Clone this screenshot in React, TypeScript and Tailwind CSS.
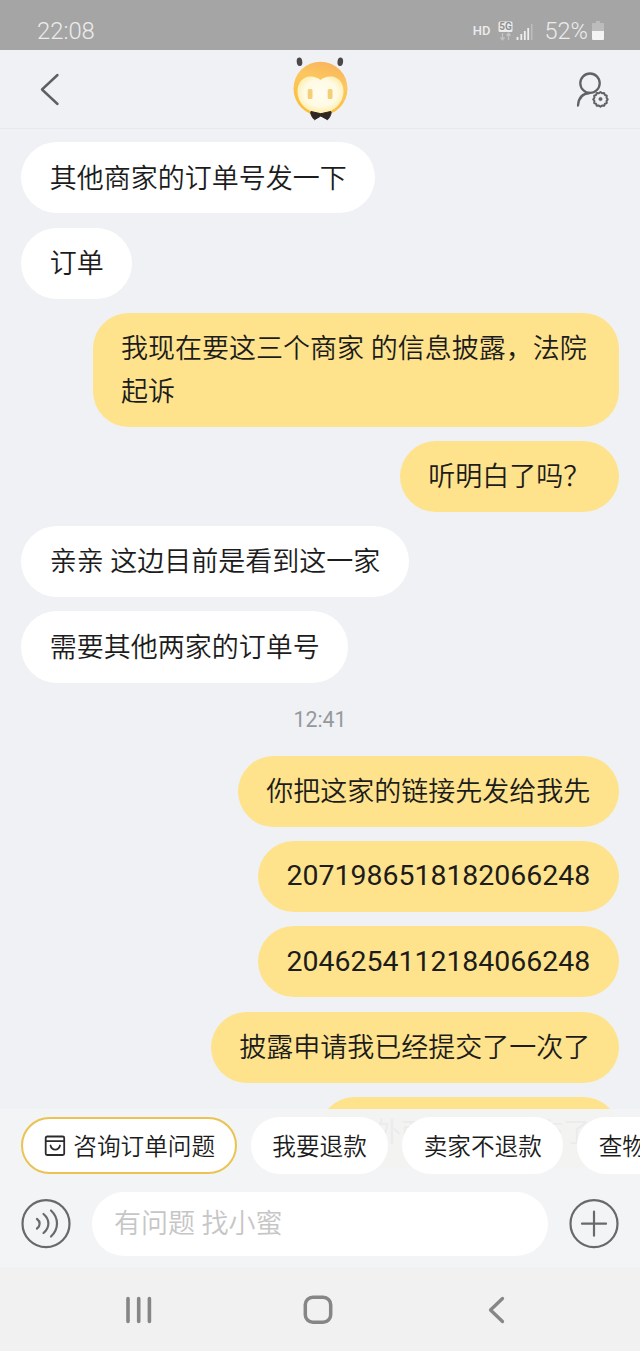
type Message = {
  from: "agent" | "me";
  text: string;
  numeric?: boolean;
};

const EARLIER: Message[] = [
  { from: "agent", text: "其他商家的订单号发一下" },
  { from: "agent", text: "订单" },
  { from: "me", text: "我现在要这三个商家 的信息披露，法院起诉" },
  { from: "me", text: "听明白了吗？" },
  { from: "agent", text: "亲亲 这边目前是看到这一家" },
  { from: "agent", text: "需要其他两家的订单号" },
];

const LATER: Message[] = [
  { from: "me", text: "你把这家的链接先发给我先" },
  { from: "me", text: "2071986518182066248", numeric: true },
  { from: "me", text: "2046254112184066248", numeric: true },
  { from: "me", text: "披露申请我已经提交了一次了" },
  { from: "me", text: "另外两家也都提交了" },
];

export default function App() {
  return (
    <div className="w-[640px] h-[1351px] flex flex-col overflow-hidden bg-[#eff1f5] font-['Roboto','Noto_Sans_CJK_SC',sans-serif] text-[#1c1c1c]">
      <StatusBar />
      <Header />
      <main className="flex-1 min-h-0 overflow-hidden flex flex-col gap-[14.22px] px-[21.33px] pt-[13.4px]">
        {EARLIER.map((m) => (
          <Bubble key={m.text} message={m} />
        ))}
        <div className="h-[44.8px] shrink-0 flex items-center justify-center pt-[2px] text-[21.3px] text-[#96989c]">
          12:41
        </div>
        {LATER.map((m) => (
          <Bubble key={m.text} message={m} />
        ))}
      </main>
      <footer className="relative shrink-0 h-[158px] -mt-[158px] bg-[#f3f4f5]/96">
        <QuickReplies />
        <InputBar />
      </footer>
      <NavBar />
    </div>
  );
}

function StatusBar() {
  return (
    <div className="h-[50px] shrink-0 flex items-center justify-between bg-[#a5a5a5] pl-[37px] pr-[36px] pt-[14px] text-[#ececec]">
      <span className="text-[23.8px] font-light">22:08</span>
      <div className="flex items-center">
        <span className="text-[13px] font-medium -mt-[2px]">HD</span>
        <svg width="15" height="22" viewBox="0 0 15 22" className="ml-[7px] -mt-[3px]">
          <rect x="0.5" y="1.5" width="14" height="10.5" rx="1.5" fill="#ececec" />
          <text
            x="7.5"
            y="10.3"
            textAnchor="middle"
            fontSize="10"
            fontWeight="700"
            fill="#8e8e8e"
          >
            5G
          </text>
          <path
            d="M4.5 13v6.5M2.5 17.5l2 2.2 2-2.2M10.5 20v-6.5M8.5 15.5l2-2.2 2 2.2"
            stroke="#c4c4c4"
            strokeWidth="1.3"
            fill="none"
          />
        </svg>
        <svg width="18" height="18" viewBox="0 0 18 18" className="ml-[3px]">
          <path
            d="M1.5 17v-3M5.3 17v-6M8.8 17v-9M12.2 17v-12"
            stroke="#efefef"
            strokeWidth="1.8"
          />
          <path d="M15.7 17v-16" stroke="#bdbdbd" strokeWidth="1.6" />
        </svg>
        <span className="ml-[11px] text-[23.5px] font-light">52%</span>
        <svg width="12" height="20" viewBox="0 0 12 20" className="ml-[4px] -mt-[3px]">
          <path d="M4 0h4v2h3a1 1 0 0 1 1 1v8H0V3a1 1 0 0 1 1-1h3z" fill="#bcbcbc" />
          <path d="M0 10h12v8a1 1 0 0 1-1 1H1a1 1 0 0 1-1-1z" fill="#f4f4f4" />
        </svg>
      </div>
    </div>
  );
}

function Header() {
  return (
    <header className="h-[79px] shrink-0 flex items-center justify-between border-b border-[#e6e8eb] bg-[#f0f1f5] pl-[39px] pr-[31px]">
      <svg width="22" height="34" viewBox="0 0 22 34" fill="none">
        <path
          d="M18.5 3L3 17.5l15.5 14.5"
          stroke="#5e5f62"
          strokeWidth="2.4"
          strokeLinecap="round"
          strokeLinejoin="round"
        />
      </svg>
      <Mascot />
      <svg width="34" height="38" viewBox="0 0 34 38" fill="none" stroke="#616265">
        <circle cx="15" cy="13.2" r="9.7" strokeWidth="2.3" />
        <path d="M3 35.5c.5-7 4-12 11.5-12.5" strokeWidth="2.3" strokeLinecap="round" />
        <path
          d="M25.5 22.1l1.9 1.5 2.4-.3.9 2.3 2.2.9-.3 2.4 1.4 1.9-1.4 1.9.3 2.4-2.2.9-.9 2.3-2.4-.3-1.9 1.5-1.9-1.5-2.4.3-.9-2.3-2.2-.9.3-2.4-1.4-1.9 1.4-1.9-.3-2.4 2.2-.9.9-2.3 2.4.3z"
          transform="translate(3.8 3.2) scale(0.85)"
          strokeWidth="2.4"
          strokeLinejoin="round"
        />
        <circle cx="25.5" cy="29" r="1.6" fill="#616265" strokeWidth="0.8" />
      </svg>
    </header>
  );
}

function Mascot() {
  return (
    <svg width="58" height="66" viewBox="0 0 58 66" className="relative left-[1.5px] top-[1px]">
      <defs>
        <linearGradient id="head" x1="0.7" y1="0" x2="0.4" y2="1">
          <stop offset="0" stopColor="#f8b45c" />
          <stop offset="0.35" stopColor="#fcc75f" />
          <stop offset="1" stopColor="#fbbd38" />
        </linearGradient>
        <radialGradient id="face" cx="0.5" cy="0.45" r="0.6">
          <stop offset="0" stopColor="#fffdf0" />
          <stop offset="0.6" stopColor="#fffae4" />
          <stop offset="1" stopColor="#fdea9f" />
        </radialGradient>
      </defs>
      <ellipse cx="8.5" cy="4.8" rx="2.8" ry="4.3" fill="#4d4746" transform="rotate(-6 8.5 4.8)" />
      <ellipse cx="49.3" cy="4.8" rx="2.8" ry="4.3" fill="#4d4746" transform="rotate(6 49.3 4.8)" />
      <circle cx="29.5" cy="31.7" r="27" fill="url(#head)" />
      <path
        d="M29.5 23c3-2.500 7-4 11.500-3.500 7 1 11.500 7 11.500 14.500 0 13-10.500 22-23 22s-23-9-23-22c0-7.500 4.500-13.500 11.500-14.500 4.500-.5 8.500 1 11.500 3.500z"
        fill="url(#face)"
      />
      <rect x="16.7" y="32" width="4.8" height="10" rx="1.5" fill="#f5cf78" />
      <rect x="36.7" y="32" width="4.8" height="10" rx="1.5" fill="#f5cf78" />
      <path
        d="M20 54.500l9.800 2.200 10-2.200c1 1.500-.8 6-3.300 8.200l-6.700-3.700-6.300 3.700c-2.500-2.200-4.500-6.500-3.500-8.200z"
        fill="#2e2622"
        stroke="#2e2622"
        strokeLinejoin="round"
      />
    </svg>
  );
}

function Bubble({ message }: { message: Message }) {
  const side =
    message.from === "me" ? "self-end bg-[#fee38c]" : "self-start bg-white";
  const size = message.numeric
    ? "text-[28.44px] pt-[14.2px] pb-[14.2px]"
    : "text-[27px] font-[350] pt-[15.3px] pb-[13.1px]";
  return (
    <div
      className={`shrink-0 max-w-[526px] rounded-[35.5px] px-[28.44px] leading-[42.67px] ${side} ${size}`}
    >
      {message.text}
    </div>
  );
}

function QuickReplies() {
  return (
    <div className="flex gap-[14.22px] pl-[21.33px] pt-[8px] overflow-hidden whitespace-nowrap text-[23.64px] font-[350]">
      <div className="h-[57px] shrink-0 flex items-center rounded-full border-2 border-[#eac353] bg-white pl-[20px] pr-[19.7px]">
        <svg
          width="24"
          height="24"
          viewBox="0 0 24 24"
          fill="none"
          stroke="#2b2b2b"
          strokeWidth="1.8"
          strokeLinecap="round"
          strokeLinejoin="round"
          className="mr-[6px]"
        >
          <rect x="2.7" y="2.5" width="18.5" height="18.5" rx="1.5" />
          <path d="M3 7.2h18M7.5 11.5c1.5 5.5 8 5.500 9.500 0" />
        </svg>
        <span className="pt-[4px]">咨询订单问题</span>
      </div>
      {["我要退款", "卖家不退款", "查物流"].map((label) => (
        <div
          key={label}
          className="h-[57px] shrink-0 flex items-center rounded-full bg-white px-[21.33px] pt-[4px]"
        >
          {label}
        </div>
      ))}
    </div>
  );
}

function InputBar() {
  return (
    <div className="flex items-center px-[21px] pt-[18px]">
      <svg width="50" height="50" viewBox="0 0 50 50" fill="none" stroke="#68696b" strokeWidth="2.2" strokeLinecap="round">
        <circle cx="25" cy="24.7" r="23.5" />
        <path d="M16 20c3.5 2.5 3.5 7 0 9.500M22.500 15c6.500 5.500 6.500 13.500 0 19M30 11.500c8 7.500 8 18.500 0 26" />
      </svg>
      <div className="ml-[21px] flex-1 h-[64px] flex items-center rounded-full bg-white pl-[22px] pt-[1px] text-[27px] font-[350] text-[#c6c6c6]">
        有问题 找小蜜
      </div>
      <svg width="50" height="50" viewBox="0 0 50 50" fill="none" stroke="#68696b" strokeWidth="2.2" strokeLinecap="round" className="ml-[21px]">
        <circle cx="25" cy="24.7" r="23.5" />
        <path d="M25 12.7v24M13 24.7h24" />
      </svg>
    </div>
  );
}

function NavBar() {
  return (
    <nav className="h-[84px] shrink-0 flex items-center bg-[#f1f1f1] pl-[124px] pt-[2px]">
      <svg width="29" height="28" viewBox="0 0 29 28" stroke="#868686" strokeWidth="3.6" strokeLinecap="round">
        <path d="M4 2.5v23M14.7 2.5v23M25.4 2.5v23" />
      </svg>
      <svg width="30" height="30" viewBox="0 0 30 30" fill="none" stroke="#868686" strokeWidth="3.5" className="ml-[149.5px]">
        <rect x="2.3" y="2.3" width="25.4" height="25" rx="7.5" />
      </svg>
      <svg width="18" height="28" viewBox="0 0 18 28" fill="none" stroke="#868686" strokeWidth="3.3" strokeLinecap="round" strokeLinejoin="round" className="ml-[155.5px]">
        <path d="M14.5 2.5L2.5 14l12 11.5" />
      </svg>
    </nav>
  );
}
